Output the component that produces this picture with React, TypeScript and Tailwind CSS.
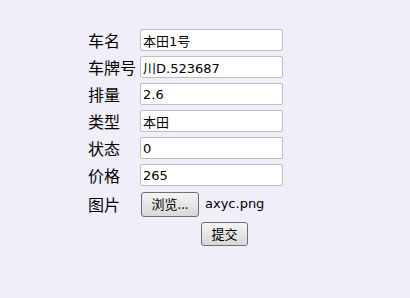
const rows = [
  { label: "车名", value: "本田1号" },
  { label: "车牌号", value: "川D.523687" },
  { label: "排量", value: "2.6" },
  { label: "类型", value: "本田" },
  { label: "状态", value: "0" },
  { label: "价格", value: "265" },
];

export default function App() {
  return (
    <div className="min-h-[298px] w-[410px] bg-[#f0eef8] pl-[88px] pt-[29px] text-black">
      <div className="grid grid-cols-[52px_143px] items-center gap-y-[5px]">
        {rows.map((r) => (
          <div key={r.label} className="contents">
            <div className="font-['Noto_Sans_CJK_SC','DejaVu_Sans',sans-serif] text-[16px] leading-[22px]">
              {r.label}
            </div>
            <input
              readOnly
              value={r.value}
              className="h-[22px] w-[143px] rounded-[2px] border border-[#bdbdc2] bg-white px-[2px] font-['DejaVu_Sans','Noto_Sans_CJK_SC',sans-serif] text-[13px] outline-none"
            />
          </div>
        ))}

        {/* 图片 */}
        <div className="font-['Noto_Sans_CJK_SC','DejaVu_Sans',sans-serif] text-[16px] leading-[26px]">
          图片
        </div>
        <div className="flex items-center gap-[6px]">
          <button className="ml-[1px] h-[25px] w-[58px] rounded-[3px] border border-[#707070] bg-gradient-to-b from-[#f4f4f4] to-[#d8d8d8] font-['Noto_Sans_CJK_SC','DejaVu_Sans',sans-serif] text-[13px]">
            浏览...
          </button>
          <span className="font-['DejaVu_Sans','Noto_Sans_CJK_SC',sans-serif] text-[13px]">
            axyc.png
          </span>
        </div>

        <div />
        <div className="-mt-[1px]">
          <button className="ml-[61px] h-[24px] w-[47px] rounded-[3px] border border-[#707070] bg-gradient-to-b from-[#f4f4f4] to-[#d8d8d8] font-['Noto_Sans_CJK_SC','DejaVu_Sans',sans-serif] text-[13px]">
            提交
          </button>
        </div>
      </div>
    </div>
  );
}
